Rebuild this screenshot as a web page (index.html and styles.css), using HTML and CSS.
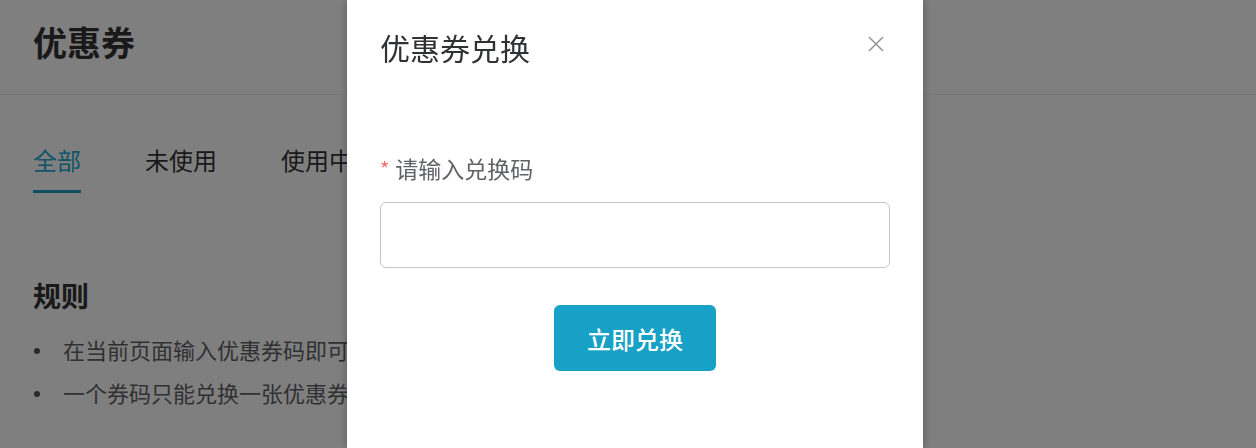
FILE: index.html
```html
<!DOCTYPE html>
<html lang="zh-CN">
<head>
<meta charset="utf-8">
<title>优惠券</title>
<link rel="stylesheet" href="styles.css">
</head>
<body>
<div class="page">
  <header class="page-header">
    <h1 class="page-title">优惠券</h1>
  </header>
  <nav class="tabs">
    <span class="tab active">全部</span>
    <span class="tab">未使用</span>
    <span class="tab">使用中</span>
  </nav>
  <section class="rules">
    <h2 class="rules-title">规则</h2>
    <ul class="rules-list">
      <li>在当前页面输入优惠券码即可兑换</li>
      <li>一个券码只能兑换一张优惠券</li>
    </ul>
  </section>
</div>
<div class="mask"></div>
<div class="dialog">
  <div class="dialog-header">
    <span class="dialog-title">优惠券兑换</span>
    <button class="dialog-close" aria-label="关闭">
      <svg width="16" height="16" viewBox="0 0 16 16"><path d="M1 1L15 15M15 1L1 15" stroke="#909399" stroke-width="1.5" fill="none"/></svg>
    </button>
  </div>
  <div class="form-item">
    <label class="form-label"><span class="req">*</span>请输入兑换码</label>
    <input class="form-input" type="text">
  </div>
  <div class="dialog-footer">
    <button class="btn-primary">立即兑换</button>
  </div>
</div>
</body>
</html>
```
FILE: styles.css
```css
html, body {
  margin: 0;
  padding: 0;
  background: #fff;
  font-family: "Noto Sans CJK SC", "Noto Sans", sans-serif;
  width: 1256px;
  height: 448px;
  overflow: hidden;
}

.page {
  display: flex;
  flex-direction: column;
}

.page-header {
  box-sizing: border-box;
  height: 95px;
  padding: 25px 0 0 33px;
  border-bottom: 1px solid #ececec;
}

.page-title {
  margin: 0;
  font-size: 34px;
  line-height: 34px;
  font-weight: 700;
  color: #333;
}

.tabs {
  display: flex;
  gap: 64px;
  padding: 0 0 0 33px;
  margin-top: 53px;
}

.tab {
  font-size: 24px;
  line-height: 24px;
  color: #333;
  padding-bottom: 18px;
  border-bottom: 3px solid transparent;
}

.tab.active {
  color: #1fa9cf;
  border-bottom-color: #1a9cc0;
}

.rules {
  padding-left: 33px;
  margin-top: 88px;
}

.rules-title {
  margin: 0;
  font-size: 28px;
  line-height: 28px;
  font-weight: 700;
  color: #333;
}

.rules-list {
  list-style: none;
  margin: 29px 0 0;
  padding: 0;
  display: flex;
  flex-direction: column;
  gap: 21px;
}

.rules-list li {
  position: relative;
  padding-left: 30px;
  font-size: 22px;
  line-height: 22px;
  color: #5f6266;
}

.rules-list li::before {
  content: "";
  position: absolute;
  left: 1px;
  top: 10px;
  width: 6px;
  height: 6px;
  border-radius: 50%;
  background: #555;
}

.mask {
  position: fixed;
  inset: 0;
  background: rgba(0, 0, 0, 0.5);
}

.dialog {
  position: absolute;
  left: 347px;
  top: 0;
  bottom: 0;
  width: 576px;
  box-sizing: border-box;
  padding: 32px 33px 0;
  background: #fff;
  box-shadow: 0 0 8px rgba(0, 0, 0, 0.3);
  display: flex;
  flex-direction: column;
}

.dialog-header {
  display: flex;
  justify-content: space-between;
  align-items: flex-start;
}

.dialog-title {
  font-size: 30px;
  line-height: 30px;
  color: #303133;
}

.dialog-close {
  margin: 4px 6px 0 0;
  padding: 0;
  border: 0;
  background: none;
  width: 16px;
  height: 16px;
  display: flex;
}

.form-item {
  margin-top: 95px;
  display: flex;
  flex-direction: column;
}

.form-label {
  font-size: 23px;
  line-height: 23px;
  color: #606266;
  display: flex;
  align-items: flex-start;
}

.req {
  color: #f56c6c;
  font-size: 20px;
  line-height: 20px;
  margin: 2px 6px 0 0;
}

.form-input {
  box-sizing: border-box;
  margin-top: 22px;
  height: 66px;
  width: 100%;
  border: 1px solid #c4c7ce;
  border-radius: 6px;
  outline: none;
  background: #fff;
}

.dialog-footer {
  margin-top: 37px;
  display: flex;
  justify-content: center;
}

.btn-primary {
  width: 162px;
  height: 66px;
  border: 0;
  border-radius: 6px;
  background: #17a1c6;
  color: #fff;
  font-family: "Noto Sans CJK SC", sans-serif;
  font-size: 24px;
  font-weight: 500;
  padding: 0;
}
```
